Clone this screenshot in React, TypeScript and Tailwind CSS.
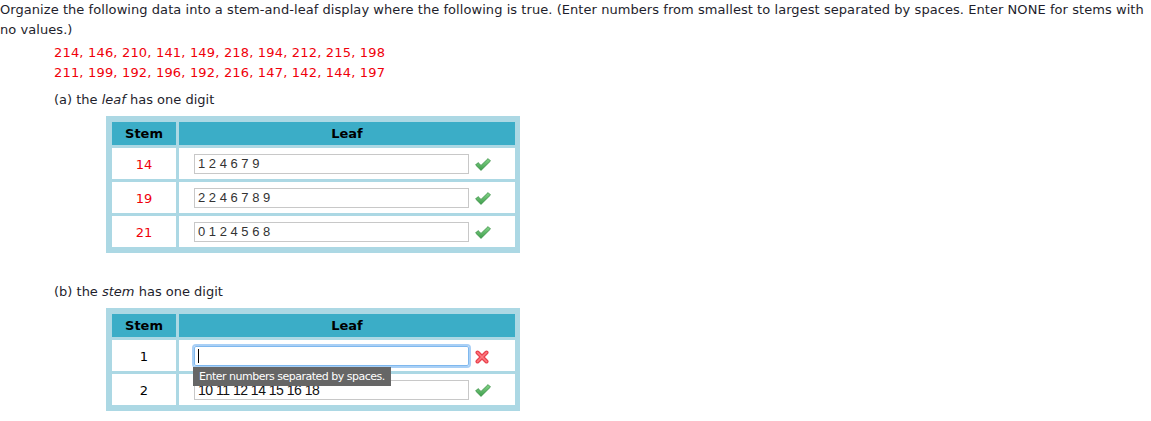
import React from "react";

const Check = () => (
  <svg width="16" height="13" viewBox="0 0 16 13" className="shrink-0">
    <defs>
      <linearGradient id="cg" x1="0" y1="0" x2="0" y2="1">
        <stop offset="0" stopColor="#84d488" />
        <stop offset="1" stopColor="#3e9e4c" />
      </linearGradient>
    </defs>
    <polygon
      points="0.6,7 3,4.6 6,7.4 13.1,0.6 15.5,3 6,12.4"
      fill="url(#cg)"
      stroke="#3c8f48"
      strokeWidth="0.8"
      strokeLinejoin="round"
    />
  </svg>
);

const Cross = () => (
  <svg width="14" height="14" viewBox="0 0 14 14" className="shrink-0">
    <g stroke="#e8424e" strokeWidth="4" strokeLinecap="round">
      <line x1="2.5" y1="2.5" x2="11.5" y2="11.5" />
      <line x1="11.5" y1="2.5" x2="2.5" y2="11.5" />
    </g>
    <g stroke="#ff7a80" strokeWidth="1.6" strokeLinecap="round">
      <line x1="2.5" y1="2.5" x2="11.5" y2="11.5" />
      <line x1="11.5" y1="2.5" x2="2.5" y2="11.5" />
    </g>
  </svg>
);

type Row = {
  stem: string;
  value: string;
  red: boolean;
  ok: boolean;
  focused?: boolean;
  tooltip?: boolean;
  big?: boolean;
};

const Table = ({ rows }: { rows: Row[] }) => (
  <div className="ml-[106px] w-[414px] bg-[#acd8e4] p-[6px] pr-[5px] flex flex-col gap-[3px]">
    <div className="flex gap-[3px] h-[23px]">
      <div className="w-[64px] bg-[#3badc7] flex items-center justify-center font-bold text-[13px] text-black">
        Stem
      </div>
      <div className="flex-1 bg-[#3badc7] flex items-center justify-center font-bold text-[13px] text-black">
        Leaf
      </div>
    </div>
    {rows.map((r, i) => (
      <div key={i} className="flex gap-[3px] h-[31px]">
        <div
          className={`w-[64px] bg-white flex items-center justify-center text-[13px] pt-[2px] ${
            r.red ? "text-[#f0000a]" : "text-black"
          }`}
        >
          {r.stem}
        </div>
        <div className="flex-1 bg-white flex items-center relative">
          <div
            className={`ml-[15px] w-[275px] h-[20px] bg-white flex items-center pl-[3px] relative ${
              r.focused
                ? "border border-[#7fb8ee] outline-[2px] outline-solid outline-[#a9d0f6] rounded-[2px]"
                : "border border-[#c8c8c8]"
            }`}
            style={{ fontFamily: '"Liberation Sans", Arial, sans-serif' }}
          >
            {r.focused && <span className="block w-[1px] h-[14px] bg-black ml-[0px]" />}
            <span
              className={
                r.big
                  ? "text-[14px] text-[#111] tracking-[-0.5px]"
                  : "text-[13px] text-[#333] whitespace-pre"
              }
            >
              {r.value}
            </span>
          </div>
          <div className="ml-[6px] mt-[2px]">{r.ok ? <Check /> : <Cross />}</div>
          {r.tooltip && (
            <div
              className="absolute left-[14px] top-[27px] z-10 h-[19px] bg-[#666666] text-white text-[11px] tracking-[-0.5px] px-[6px] flex items-center whitespace-nowrap"
              style={{ fontFamily: '"DejaVu Sans", Verdana, sans-serif' }}
            >
              Enter numbers separated by spaces.
            </div>
          )}
        </div>
      </div>
    ))}
  </div>
);

export default function App() {
  return (
    <div
      className="w-[1151px] h-[421px] bg-white text-[#1e1e2c] text-[13px] leading-[20px] overflow-hidden"
      style={{ fontFamily: '"DejaVu Sans", Verdana, sans-serif' }}
    >
      <p className="whitespace-nowrap tracking-[0.06px]">
        Organize the following data into a stem-and-leaf display where the following is true. (Enter numbers from
        smallest to largest separated by spaces. Enter NONE for stems with
        <br />
        no values.)
      </p>
      <div className="ml-[54px] mt-[3px] text-[#f0000a] tracking-[0.18px]">
        <div>214, 146, 210, 141, 149, 218, 194, 212, 215, 198</div>
        <div>211, 199, 192, 196, 192, 216, 147, 142, 144, 197</div>
      </div>
      <div className="ml-[54px] mt-[7px] mb-[6px]">
        (a) the <i>leaf</i> has one digit
      </div>
      <Table
        rows={[
          { stem: "14", value: "1 2 4 6 7 9", red: true, ok: true },
          { stem: "19", value: "2 2 4 6 7 8 9", red: true, ok: true },
          { stem: "21", value: "0 1 2 4 5 6 8", red: true, ok: true },
        ]}
      />
      <div className="ml-[54px] mt-[29px] mb-[6px]">
        (b) the <i>stem</i> has one digit
      </div>
      <Table
        rows={[
          { stem: "1", value: "", red: false, ok: false, focused: true, tooltip: true },
          { stem: "2", value: "10 11 12 14 15 16 18", red: false, ok: true, big: true },
        ]}
      />
    </div>
  );
}
